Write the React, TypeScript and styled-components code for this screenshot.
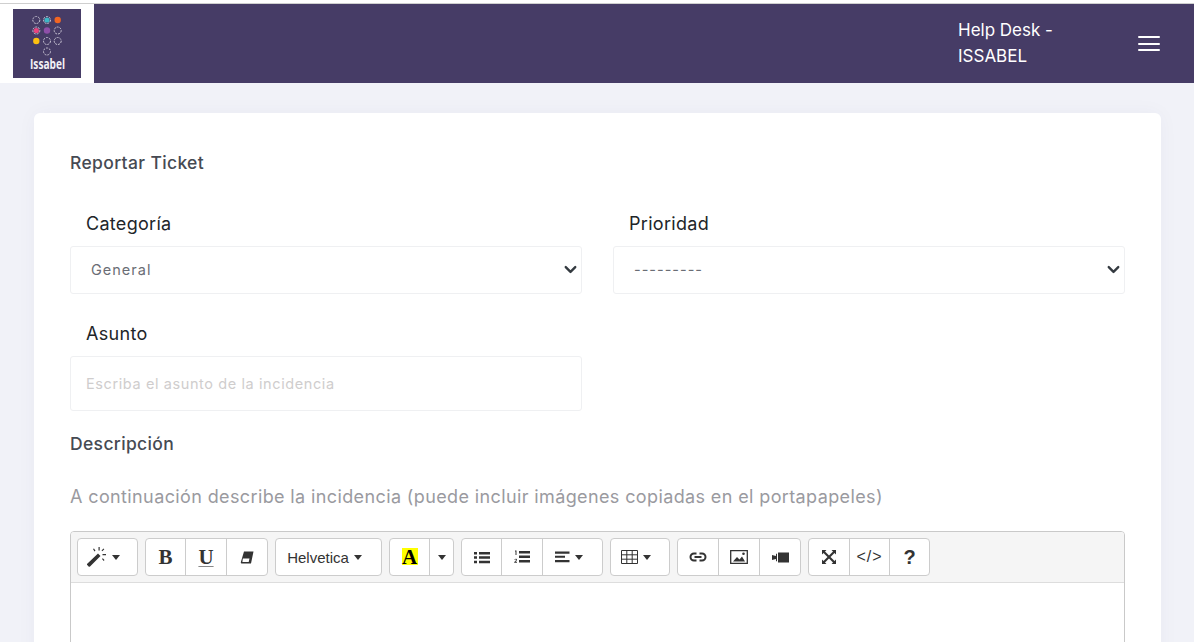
import React from 'react';
import styled, { createGlobalStyle } from 'styled-components';
import { ChevronDown } from 'lucide-react';

const GlobalStyle = createGlobalStyle`
    html, body {
        margin: 0;
        height: 642px;
        overflow: hidden;
        background: #f1f2f8;
        font-family: "Inter", "Noto Sans", sans-serif;
    }

    * {
        box-sizing: border-box;
    }
`;

const TopLine = styled.div`
    height: 4px;
    background: #fff;
    border-bottom: 1px solid #cfcfcf;
`;

const Header = styled.header`
    display: flex;
    align-items: stretch;
    height: 79px;
    background: #463c66;
`;

const LogoBox = styled.div`
    display: flex;
    width: 94px;
    padding: 5px 13px;
    background: #fff;
`;

const HeaderRight = styled.div`
    display: flex;
    flex: 1;
    justify-content: flex-end;
    align-items: center;
    padding-right: 34px;
`;

const Brand = styled.div`
    width: 180px;
    padding-bottom: 2px;
    color: #fff;
    font-size: 17px;
    line-height: 26px;
`;

const Burger = styled.div`
    display: flex;
    flex-direction: column;
    gap: 4.5px;
    width: 22px;
`;

const BurgerBar = styled.span`
    height: 2px;
    background: #fff;
    border-radius: 1px;
`;

const Card = styled.main`
    margin: 30px 33px 0 34px;
    padding: 38px 36px 0;
    height: 600px;
    background: #fff;
    border-radius: 6px;
    box-shadow: 0 0 20px rgba(60, 60, 110, 0.04);
`;

const Title = styled.h1`
    margin: 0 0 36px;
    font-size: 17.5px;
    line-height: 24px;
    font-weight: 500;
    letter-spacing: 0.35px;
    color: #464a53;
`;

const FieldRow = styled.div`
    display: grid;
    grid-template-columns: 512px 512px;
    column-gap: 31px;
`;

const Field = styled.div`
    display: flex;
    flex-direction: column;
`;

const FieldLabel = styled.label`
    padding-left: 16px;
    margin-bottom: 9px;
    font-size: 18px;
    line-height: 26px;
    letter-spacing: 0.3px;
    color: #212529;
`;

const SelectWrap = styled.div`
    position: relative;
    height: 48px;
`;

const Select = styled.select`
    appearance: none;
    width: 100%;
    height: 100%;
    padding: 0 20px 2px;
    border: 1px solid #eff0f2;
    border-radius: 3px;
    background: #fff;
    font: inherit;
    font-size: 14.5px;
    letter-spacing: 1px;
    color: #6a6d75;
`;

const SelectArrow = styled(ChevronDown)`
    position: absolute;
    top: 14px;
    right: 2px;
    color: #343a40;
    pointer-events: none;
`;

const SubjectRow = styled(FieldRow)`
    margin-top: 27px;
`;

const TextInput = styled.input`
    height: 55px;
    padding: 0 15px;
    border: 1px solid #eff0f2;
    border-radius: 3px;
    font: inherit;
    font-size: 14.5px;
    letter-spacing: 0.6px;

    &::placeholder {
        color: #cfcdcd;
    }
`;

const SectionTitle = styled.h2`
    margin: 20px 0 0;
    font-size: 17.5px;
    line-height: 26px;
    font-weight: 500;
    letter-spacing: 0.35px;
    color: #464a53;
`;

const Hint = styled.p`
    margin: 27px 0 0;
    font-size: 18px;
    line-height: 26px;
    letter-spacing: 0.38px;
    color: #9a9a9f;
`;

const Editor = styled.div`
    margin-top: 21px;
    width: 1055px;
    height: 200px;
    border: 1px solid #c9c9c9;
    border-radius: 4px 4px 0 0;
    overflow: hidden;
`;

const Toolbar = styled.div`
    display: flex;
    gap: 7px;
    height: 51px;
    padding: 6px 6px 0;
    background: #f5f5f5;
    border-bottom: 1px solid #dddddd;
`;

const BtnGroup = styled.div`
    display: flex;
    height: 38px;
    background: #fff;
    border: 1px solid #cccccc;
    border-radius: 4px;
`;

const ToolBtn = styled.div<{ $w?: number; $menu?: boolean }>`
    display: flex;
    align-items: center;
    justify-content: center;
    gap: 5px;
    width: ${(p) => p.$w ?? 41}px;
    padding-right: ${(p) => (p.$menu ? 8 : 0)}px;
    color: #333;

    & + & {
        border-left: 1px solid #cccccc;
    }
`;

const Caret = styled.span`
    width: 0;
    height: 0;
    border-top: 5px solid #333;
    border-left: 4px solid transparent;
    border-right: 4px solid transparent;
`;

const FontName = styled.span`
    font-family: "Liberation Sans", Arial, sans-serif;
    font-size: 15px;
    color: #333;
`;

const SerifGlyph = styled.span<{ $underline?: boolean }>`
    font-family: "Liberation Serif", serif;
    font-weight: 700;
    font-size: 21px;
    line-height: 20px;
    color: #333;
    text-decoration: ${(p) => (p.$underline ? 'underline' : 'none')};
    text-decoration-color: #888;
    text-decoration-thickness: 1px;
    text-underline-offset: 2px;
`;

const ColorGlyph = styled(SerifGlyph)`
    width: 16px;
    height: 17px;
    margin-bottom: 2px;
    line-height: 18px;
    text-align: center;
    background: #ffff00;
    color: #000;
`;

const CodeGlyph = styled.span`
    font-family: "Liberation Sans", Arial, sans-serif;
    font-size: 16px;
    color: #333;
    letter-spacing: 1px;
`;

const HelpGlyph = styled.span`
    font-family: "Liberation Sans", Arial, sans-serif;
    font-weight: 700;
    font-size: 20px;
    color: #333;
`;

const Icon: React.FC<{ w?: number; h?: number; children: React.ReactNode }> = ({ w = 18, h = 16, children }) => (
    <svg width={w} height={h} viewBox={`0 0 ${w} ${h}`} fill="#333">
        {children}
    </svg>
);

// coloured dots of the logo: dashed rings are the unlit ones
const dots = [
    { x: 23.3, y: 11, ring: true },
    { x: 34, y: 11, fill: '#3db6c6', ring: true },
    { x: 44.7, y: 11, fill: '#f26522' },
    { x: 23.3, y: 21.5, fill: '#e8447f', ring: true },
    { x: 34, y: 21.5, fill: '#8e4fa8' },
    { x: 44.7, y: 21.5, ring: true },
    { x: 23.3, y: 32, fill: '#fdc010' },
    { x: 34, y: 32, ring: true },
    { x: 44.7, y: 32, ring: true },
    { x: 34, y: 42.5, ring: true }
];

const LogoText = styled.text`
    font-family: "Open Sans", sans-serif;
    font-size: 14px;
    font-weight: 700;
    fill: #f3f1f6;
`;

const Logo: React.FC = () => (
    <svg width="68" height="69" viewBox="0 0 68 69">
        <rect width="68" height="69" fill="#463c66" />
        {dots.map((d) => (
            <g key={`${d.x}-${d.y}`}>
                {d.fill && <circle cx={d.x} cy={d.y} r={d.ring ? 2.6 : 3.2} fill={d.fill} />}
                {d.ring && (
                    <circle cx={d.x} cy={d.y} r="3.5" fill="none" stroke="#c9c5d4" strokeWidth="1" strokeDasharray="2 1" />
                )}
            </g>
        ))}
        <LogoText x="17" y="60" textLength={35} lengthAdjust="spacingAndGlyphs">Issabel</LogoText>
    </svg>
);

const App: React.FC = () => (
    <>
        <GlobalStyle />
        <TopLine />
        <Header>
            <LogoBox>
                <Logo />
            </LogoBox>
            <HeaderRight>
                <Brand>Help Desk -<br />ISSABEL</Brand>
                <Burger>
                    <BurgerBar />
                    <BurgerBar />
                    <BurgerBar />
                </Burger>
            </HeaderRight>
        </Header>

        <Card>
            <Title>Reportar Ticket</Title>

            <FieldRow>
                <Field>
                    <FieldLabel>Categoría</FieldLabel>
                    <SelectWrap>
                        <Select defaultValue="General">
                            <option>General</option>
                        </Select>
                        <SelectArrow size={19} strokeWidth={3} />
                    </SelectWrap>
                </Field>
                <Field>
                    <FieldLabel>Prioridad</FieldLabel>
                    <SelectWrap>
                        <Select defaultValue="---------">
                            <option>---------</option>
                        </Select>
                        <SelectArrow size={19} strokeWidth={3} />
                    </SelectWrap>
                </Field>
            </FieldRow>

            <SubjectRow>
                <Field>
                    <FieldLabel>Asunto</FieldLabel>
                    <TextInput placeholder="Escriba el asunto de la incidencia" />
                </Field>
            </SubjectRow>

            <SectionTitle>Descripción</SectionTitle>
            <Hint>A continuación describe la incidencia (puede incluir imágenes copiadas en el portapapeles)</Hint>

            <Editor>
                <Toolbar>
                    <BtnGroup>
                        <ToolBtn $w={59} $menu>
                            <Icon w={20} h={20}>
                                <path d="M.5 16.500 11 6.500l2.500 2.500L3 19.500a1 1 0 0 1-1.400 0L.5 18.300a1 1 0 0 1 0-1.800Z" />
                                <path d="M11.500 0h1.200v3.500h-1.200zM15.500 7h3.500v1.200h-3.500zM6 2l1-.6 1.500 2.400-1 .6zM15 12l.8-.8 1.700 1.900-.8.8zM16.500 1.500l.8.8-2 2-.8-.8z" />
                            </Icon>
                            <Caret />
                        </ToolBtn>
                    </BtnGroup>

                    <BtnGroup>
                        <ToolBtn $w={39}><SerifGlyph>B</SerifGlyph></ToolBtn>
                        <ToolBtn><SerifGlyph $underline>U</SerifGlyph></ToolBtn>
                        <ToolBtn>
                            <Icon w={14} h={13}>
                                <path d="M4 .5h9.500L11 12.500H1.800a1 1 0 0 1-1-1.200Z" />
                                <path d="M2.800 7.500h6.700l-.8 3.500H2.400Z" fill="#fff" />
                            </Icon>
                        </ToolBtn>
                    </BtnGroup>

                    <BtnGroup>
                        <ToolBtn $w={105} $menu>
                            <FontName>Helvetica</FontName>
                            <Caret />
                        </ToolBtn>
                    </BtnGroup>

                    <BtnGroup>
                        <ToolBtn $w={39}><ColorGlyph>A</ColorGlyph></ToolBtn>
                        <ToolBtn $w={24}><Caret /></ToolBtn>
                    </BtnGroup>

                    <BtnGroup>
                        <ToolBtn $w={39}>
                            <Icon w={16} h={13}>
                                <path d="M0 1h3v2.500H0zM0 5.300h3v2.500H0zM0 9.700h3v2.500H0zM5 1h11v2.500H5zM5 5.300h11v2.500H5zM5 9.700h11v2.500H5z" />
                            </Icon>
                        </ToolBtn>
                        <ToolBtn>
                            <Icon w={16} h={14}>
                                <path d="M5 1h11v2.500H5zM5 5.500h11V8H5zM5 10h11v2.500H5z" />
                                <path d="M1 .5h1.500V5H1.500V1.500H1zM.3 9.500c1-1.300 2.700-1 2.700.3 0 .8-.8 1.300-1.500 2H3v.9H.2V12c1-1 1.800-1.600 1.800-2.100 0-.5-.8-.4-1.200 0z" />
                            </Icon>
                        </ToolBtn>
                        <ToolBtn $w={60} $menu>
                            <Icon w={15} h={12}>
                                <path d="M0 .5h14.500v2.200H0zM0 4.800h10v2H0zM0 9h14.500v2.200H0z" />
                            </Icon>
                            <Caret />
                        </ToolBtn>
                    </BtnGroup>

                    <BtnGroup>
                        <ToolBtn $w={58} $menu>
                            <Icon w={17} h={14}>
                                <path d="M.5.5h16v13H.5zM.5 4.800h16M.5 9.200h16M5.800.5v13M11.200.5v13" fill="none" stroke="#333" />
                            </Icon>
                            <Caret />
                        </ToolBtn>
                    </BtnGroup>

                    <BtnGroup>
                        <ToolBtn $w={40}>
                            <Icon w={18} h={10}>
                                <path d="M7.500 1.500H5a3.500 3.500 0 0 0 0 7h2.500M10.500 1.500H13a3.500 3.500 0 0 1 0 7h-2.500M5.500 5h7" fill="none" stroke="#333" strokeWidth="2" />
                            </Icon>
                        </ToolBtn>
                        <ToolBtn>
                            <Icon w={18} h={14}>
                                <path d="M.7.7h16.600v12.600H.7z" fill="none" stroke="#333" strokeWidth="1.300" />
                                <path d="M3 11.500 7 7l2.500 2.500L12 6.500l3 5z" />
                                <circle cx="13.500" cy="3.800" r="1.300" />
                            </Icon>
                        </ToolBtn>
                        <ToolBtn>
                            <Icon w={17} h={11}>
                                <path d="M6 .5h11v10H6zM0 3l4 1V2l1-.5v8L4 9V7L0 8z" />
                            </Icon>
                        </ToolBtn>
                    </BtnGroup>

                    <BtnGroup>
                        <ToolBtn $w={40}>
                            <Icon w={14} h={14}>
                                <path d="M0 0h4.500L3 1.500 7 5.500 11 1.500 9.500 0H14v4.500L12.500 3 8.500 7l4 4L14 9.500V14H9.500l1.500-1.500L7 8.500 3 12.500 4.500 14H0V9.500L1.500 11l4-4-4-4L0 4.500z" />
                            </Icon>
                        </ToolBtn>
                        <ToolBtn $w={40}><CodeGlyph>&lt;/&gt;</CodeGlyph></ToolBtn>
                        <ToolBtn $w={40}><HelpGlyph>?</HelpGlyph></ToolBtn>
                    </BtnGroup>
                </Toolbar>
            </Editor>
        </Card>
    </>
);

export default App;
